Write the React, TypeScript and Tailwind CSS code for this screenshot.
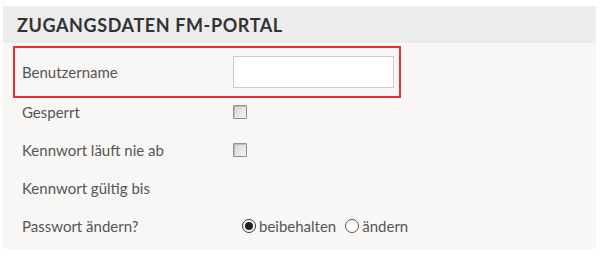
import React from "react";

function Checkbox() {
  return (
    <span className="inline-block w-[14px] h-[14px] border border-[#8f8f8f] rounded-[1px] bg-gradient-to-br from-[#d6d6d6] to-[#f4f4f4] shadow-[inset_1px_1px_1px_rgba(0,0,0,0.15)]" />
  );
}

function Radio({ checked }: { checked?: boolean }) {
  return checked ? (
    <span className="inline-flex items-center justify-center w-[14px] h-[14px] rounded-full border border-[#333] bg-white">
      <span className="w-[8px] h-[8px] rounded-full bg-[#222]" />
    </span>
  ) : (
    <span className="inline-block w-[14px] h-[14px] rounded-full border border-[#555] bg-white" />
  );
}

export default function App() {
  return (
    <div className="w-[600px] h-[256px] bg-white pt-[6px] px-[3px] font-['Lato','Liberation_Sans',sans-serif]">
      <div className="w-[593px] bg-[#f8f7f5]">
        <div className="h-[37px] bg-[#ececec] flex items-center pl-[14px]">
          <span className="text-[18px] font-bold tracking-[0.6px] text-[#333] uppercase leading-none">
            Zugangsdaten FM-Portal
          </span>
        </div>
        <div className="pt-[3px] pb-[9px]">
          <div className="ml-[10px] w-[388px] h-[52px] border-2 border-[#ee2a33] flex items-center">
            <span className="w-[218px] pl-[7px] text-[15px] text-[#555]">Benutzername</span>
            <span className="w-[161px] h-[32px] bg-white border border-[#c9cad0]" />
          </div>
          <div className="flex flex-col gap-[10px]">
            <div className="h-[28px] flex items-center">
              <span className="w-[230px] pl-[19px] text-[15px] text-[#555]">Gesperrt</span>
              <Checkbox />
            </div>
            <div className="h-[28px] flex items-center">
              <span className="w-[230px] pl-[19px] text-[15px] text-[#555]">Kennwort läuft nie ab</span>
              <Checkbox />
            </div>
            <div className="h-[28px] flex items-center">
              <span className="w-[230px] pl-[19px] text-[15px] text-[#555]">Kennwort gültig bis</span>
            </div>
            <div className="h-[28px] flex items-center">
              <span className="w-[239px] pl-[19px] text-[15px] text-[#555]">Passwort ändern?</span>
              <Radio checked />
              <span className="ml-[3px] text-[15px] text-[#555]">beibehalten</span>
              <span className="ml-[9px] flex"><Radio /></span>
              <span className="ml-[3px] text-[15px] text-[#555]">ändern</span>
            </div>
          </div>
        </div>
      </div>
    </div>
  );
}
